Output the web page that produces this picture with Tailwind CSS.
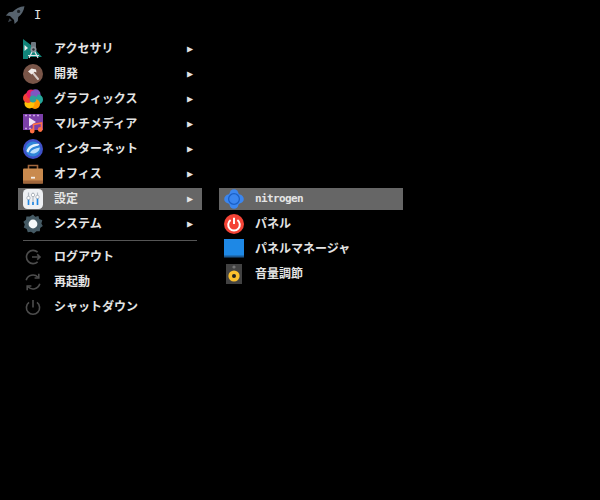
<!DOCTYPE html>
<html lang="en">
  <head>
    <meta charset="UTF-8" />
    <title>Menu</title>
    <script src="https://cdn.jsdelivr.net/npm/@tailwindcss/browser@4"></script>
  </head>
  <body class="bg-black w-[600px] h-[500px] overflow-hidden text-[12px] font-bold text-[#e4e4e4] font-['DejaVu_Sans_Mono','Noto_Sans_CJK_JP',monospace]">
    <!-- top bar -->
    <div class="flex items-center h-[30px] pl-[5px] gap-[9px]">
      <svg class="w-[20px] h-[20px]" viewBox="0 0 20 20">
        <path d="M19.5 1.2 C14.5 1.6 10.5 3.6 7.8 6.8 L4 7.2 L0.8 10.4 L5 11 L9 15 L9.6 19 L12.8 16 L13.2 12 C16.6 9.4 18.8 6 19.5 1.2Z" fill="#56626d"/>
        <path d="M4.6 13.2 L6.8 15.4 L3 17.2Z" fill="#3d454d"/>
        <circle cx="13.6" cy="6.4" r="1.6" fill="#1c2126"/>
      </svg>
      <span class="font-normal leading-none">I</span>
    </div>

    <div class="flex gap-[17px] pl-[18px] pt-[8px]">
      <!-- main menu -->
      <div class="w-[184px] flex flex-col gap-[3px]">
        <div class="flex items-center h-[22px] pl-[5px]">
          <svg class="w-[20px] h-[20px] mr-[11px]" viewBox="0 0 20 20">
            <path d="M0 0 L8 6 L19 18 L5 18 L5 20 L0 20Z" fill="#11857a"/>
            <path d="M1.5 6 L5 9 L1.5 12Z" fill="#e8f1f0"/>
            <rect x="8" y="3" width="5" height="6" rx="1" fill="#6e7780"/>
            <circle cx="10.5" cy="10.5" r="3" fill="#8b939b"/>
            <circle cx="10.5" cy="10.5" r="1.2" fill="#2b3036"/>
            <path d="M9 13 L6 19 M12 13 L15 19 M5 16.5 H16" stroke="#dfe3e6" stroke-width="1.2" fill="none"/>
          </svg>
          <span class="flex-1">アクセサリ</span>
          <span class="w-[15px] text-[10px] leading-none">▶</span>
        </div>
        <div class="flex items-center h-[22px] pl-[5px]">
          <svg class="w-[20px] h-[20px] mr-[11px]" viewBox="0 0 20 20">
            <circle cx="10" cy="10" r="10" fill="#795548"/>
            <path d="M10 9 L15 15" stroke="#d7ccc8" stroke-width="2" stroke-linecap="round"/>
            <path d="M5 7.5 L8.5 4.5 L13 5.5 L13.5 8.5 L11.5 7.8 L8.6 10.6Z" fill="#efebe9"/>
          </svg>
          <span class="flex-1">開発</span>
          <span class="w-[15px] text-[10px] leading-none">▶</span>
        </div>
        <div class="flex items-center h-[22px] pl-[5px]">
          <svg class="w-[20px] h-[20px] mr-[11px]" viewBox="0 0 20 20">
            <circle cx="12.5" cy="5.2" r="5" fill="#7e57c2"/>
            <circle cx="15" cy="10.5" r="5" fill="#26a69a"/>
            <circle cx="12" cy="15" r="5" fill="#ff9800"/>
            <circle cx="6.5" cy="14.5" r="5" fill="#ffc107"/>
            <circle cx="5" cy="9" r="5" fill="#f44336"/>
            <circle cx="8" cy="5" r="4.6" fill="#e91e63"/>
            <circle cx="11" cy="5" r="3.6" fill="#7e57c2"/>
            <circle cx="10" cy="10" r="3.4" fill="#2f9e9a"/>
          </svg>
          <span class="flex-1">グラフィックス</span>
          <span class="w-[15px] text-[10px] leading-none">▶</span>
        </div>
        <div class="flex items-center h-[22px] pl-[5px]">
          <svg class="w-[20px] h-[20px] mr-[11px]" viewBox="0 0 20 20">
            <rect x="0" y="0" width="20" height="16" fill="#7b3fa8"/>
            <path d="M2 1.5 H4 M6 1.5 H8 M10 1.5 H12 M14 1.5 H16 M2 14.5 H4 M6 14.5 H8" stroke="#c9a5e0" stroke-width="1.4"/>
            <path d="M6 3.5 L13 8 L6 12.5Z" fill="#f3e5f5"/>
            <path d="M10.5 16.5 V10.5 L18.5 9 V15" stroke="#ff7043" stroke-width="1.6" fill="none"/>
            <circle cx="9.2" cy="17" r="2.4" fill="#ff7043"/>
            <circle cx="17.2" cy="15.5" r="2.4" fill="#ff7043"/>
          </svg>
          <span class="flex-1">マルチメディア</span>
          <span class="w-[15px] text-[10px] leading-none">▶</span>
        </div>
        <div class="flex items-center h-[22px] pl-[5px]">
          <svg class="w-[20px] h-[20px] mr-[11px]" viewBox="0 0 20 20">
            <circle cx="10" cy="10" r="10" fill="#3f51c8"/>
            <circle cx="10" cy="10" r="7.5" fill="#2f86d8"/>
            <path d="M3.5 12 C5 7 10 4 16.5 5 C16 6.5 14 7 12 7.5 C9 8.2 6.5 10 5.5 13.5 C4.6 13.4 4 12.8 3.5 12Z" fill="#e3f2fd"/>
            <path d="M7 13.5 C9 10.5 12 9.5 16.8 8.5 C16.4 12 13.5 14.5 10 14.5 C8.8 14.5 7.8 14.2 7 13.5Z" fill="#bbdefb"/>
          </svg>
          <span class="flex-1">インターネット</span>
          <span class="w-[15px] text-[10px] leading-none">▶</span>
        </div>
        <div class="flex items-center h-[22px] pl-[5px]">
          <svg class="w-[20px] h-[20px] mr-[11px]" viewBox="0 0 20 20">
            <path d="M5.5 5 V1.5 H14.5 V5" stroke="#a0663c" stroke-width="1.6" fill="none"/>
            <rect x="0" y="4.5" width="20" height="15" rx="1" fill="#c98a4e"/>
            <rect x="0" y="16.5" width="20" height="3" fill="#a0663c"/>
            <rect x="8" y="12.8" width="4" height="1.8" fill="#f5efe8"/>
          </svg>
          <span class="flex-1">オフィス</span>
          <span class="w-[15px] text-[10px] leading-none">▶</span>
        </div>
        <div class="flex items-center h-[22px] pl-[5px] bg-[#666666]">
          <svg class="w-[20px] h-[20px] mr-[11px]" viewBox="0 0 20 20">
            <rect width="20" height="20" rx="4.5" fill="#eef0f3"/>
            <path d="M5.5 3.5 V16 M10 3.5 V16 M14.5 3.5 V16" stroke="#b4bbc3" stroke-width="1.2"/>
            <path d="M5.5 10 V16 M10 13 V16 M14.5 8 V16" stroke="#1e88e5" stroke-width="1.6"/>
            <circle cx="5.5" cy="9" r="1.7" fill="#fff" stroke="#7b8590" stroke-width=".5"/>
            <circle cx="10" cy="6" r="1.7" fill="#fff" stroke="#7b8590" stroke-width=".5"/>
            <circle cx="14.5" cy="8" r="1.7" fill="#fff" stroke="#7b8590" stroke-width=".5"/>
          </svg>
          <span class="flex-1">設定</span>
          <span class="w-[15px] text-[10px] leading-none">▶</span>
        </div>
        <div class="flex items-center h-[22px] pl-[5px]">
          <svg class="w-[20px] h-[20px] mr-[11px]" viewBox="0 0 20 20">
            <path d="M10 0.5 L12.2 2.8 L15.4 2 L16.3 5.1 L19.3 6.2 L18.4 9.4 L19.8 12 L17.2 14 L16.8 17.2 L13.5 17.2 L10.8 19.5 L8 17.8 L4.8 18.2 L3.7 15.1 L0.8 13.6 L1.8 10.4 L0.4 7.8 L3 5.8 L3.4 2.6 L6.8 2.6Z" fill="#455a64"/>
            <circle cx="10" cy="10" r="4.4" fill="#f5f7f8"/>
          </svg>
          <span class="flex-1">システム</span>
          <span class="w-[15px] text-[10px] leading-none">▶</span>
        </div>

        <div class="h-px bg-[#555555] mx-[5px] mt-[2px] mb-[2px]"></div>

        <div class="flex items-center h-[22px] pl-[5px]">
          <svg class="w-[20px] h-[20px] mr-[11px]" viewBox="0 0 20 20" fill="none" stroke="#4d4d4d" stroke-width="1.6">
            <path d="M14.6 5.2 A6.6 6.6 0 1 0 14.6 14.8"/>
            <path d="M9 10 H17 M14.2 7.4 L17 10 L14.2 12.6"/>
          </svg>
          <span class="flex-1">ログアウト</span>
        </div>
        <div class="flex items-center h-[22px] pl-[5px]">
          <svg class="w-[20px] h-[20px] mr-[11px]" viewBox="0 0 20 20" fill="none" stroke="#4d4d4d" stroke-width="1.6">
            <path d="M3.2 8.2 A7 7 0 0 1 15 5.2"/>
            <path d="M16.8 11.8 A7 7 0 0 1 5 14.8"/>
            <path d="M15.8 1.8 V6 H11.6"/>
            <path d="M4.2 18.2 V14 H8.4"/>
          </svg>
          <span class="flex-1">再起動</span>
        </div>
        <div class="flex items-center h-[22px] pl-[5px]">
          <svg class="w-[20px] h-[20px] mr-[11px]" viewBox="0 0 20 20" fill="none" stroke="#4d4d4d" stroke-width="1.6">
            <path d="M10 3 V10.5"/>
            <path d="M6 5.4 A6.6 6.6 0 1 0 14 5.4"/>
          </svg>
          <span class="flex-1">シャットダウン</span>
        </div>
      </div>

      <!-- submenu -->
      <div class="w-[184px] flex flex-col gap-[3px] mt-[150px]">
        <div class="flex items-center h-[22px] pl-[5px] bg-[#666666]">
          <svg class="w-[20px] h-[20px] mr-[11px]" viewBox="0 0 20 20">
            <rect x="3" y="3" width="14" height="14" rx="3" transform="rotate(45 10 10)" fill="#3b86ef"/>
            <circle cx="10" cy="4.6" r="4.4" fill="#3b86ef"/>
            <circle cx="10" cy="15.4" r="4.4" fill="#3b86ef"/>
            <circle cx="4.6" cy="10" r="4.4" fill="#3b86ef"/>
            <circle cx="15.4" cy="10" r="4.4" fill="#3b86ef"/>
            <circle cx="10" cy="10" r="5.4" fill="none" stroke="#1a5fc4" stroke-width="1.3"/>
            <circle cx="10" cy="10" r="3.4" fill="#3b86ef"/>
          </svg>
          <span class="flex-1 text-[11px] tracking-[-0.62px]">nitrogen</span>
        </div>
        <div class="flex items-center h-[22px] pl-[5px]">
          <svg class="w-[20px] h-[20px] mr-[11px]" viewBox="0 0 20 20">
            <circle cx="10" cy="10" r="10" fill="#f44336"/>
            <path d="M10 3.8 V10" stroke="#fff" stroke-width="2"/>
            <path d="M6.6 6 A5.8 5.8 0 1 0 13.4 6" stroke="#fff" stroke-width="2" fill="none"/>
          </svg>
          <span class="flex-1">パネル</span>
        </div>
        <div class="flex items-center h-[22px] pl-[5px]">
          <svg class="w-[20px] h-[20px] mr-[11px]" viewBox="0 0 20 20">
            <rect width="20" height="18" y="0" fill="#1e88e5"/>
            <rect width="20" height="2" y="16.5" fill="#1c5a94"/>
          </svg>
          <span class="flex-1">パネルマネージャ</span>
        </div>
        <div class="flex items-center h-[22px] pl-[5px]">
          <svg class="w-[20px] h-[20px] mr-[11px]" viewBox="0 0 20 20">
            <rect x="2" y="0" width="16" height="20" fill="#424242"/>
            <circle cx="10" cy="3" r="1.6" fill="#757575"/>
            <circle cx="10" cy="12" r="5.6" fill="#fbc02d"/>
            <circle cx="10" cy="12" r="2" fill="#212121"/>
          </svg>
          <span class="flex-1">音量調節</span>
        </div>
      </div>
    </div>
  </body>
</html>
